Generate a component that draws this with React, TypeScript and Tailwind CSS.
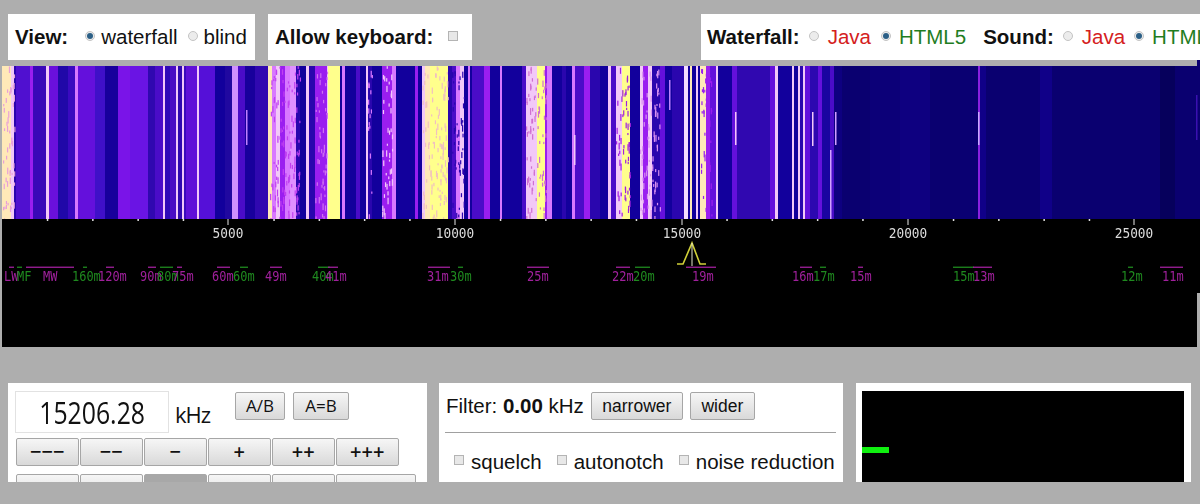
import React from "react";

const navy = "#12009c";
const deep = "#2a06ae";
const violet = "#4a0cc8";
const purple = "#6410dc";
const magenta = "#9a1ef0";
const pink = "#d878ff";
const pale = "#f2c8f8";
const cream = "#ffe9b8";
const yellow = "#ffff8c";

// x from, x to, colour
const stripes: [number, number, string][] = [
  [2, 11, cream], [11, 14, pale], [14, 16, deep], [16, 30, "#5010d0"], [30, 33, magenta], [33, 46, "#3a08b8"],
  [46, 49, pale], [49, 58, "#6a10dc"], [58, 68, "#2008a8"], [68, 75, "#3a0ac0"], [75, 78, pink], [78, 95, purple],
  [95, 105, "#4010c8"], [105, 118, "#18009c"], [118, 130, "#7a14e8"], [130, 148, "#6a14e4"], [148, 155, "#3008b0"],
  [155, 163, violet], [163, 165, pale], [165, 170, "#300ab8"], [170, 176, "#4a0cc4"], [176, 178, pale],
  [178, 182, "#3008b0"], [182, 184, pale], [184, 186, "#3a0abc"], [186, 197, "#6010d8"], [197, 199, pale],
  [199, 215, "#5510d8"], [215, 225, navy], [225, 232, "#2008a0"], [232, 238, "#d090ff"], [238, 245, violet],
  [245, 255, "#18009c"], [255, 268, "#3008b0"], [268, 272, cream], [272, 276, pink], [276, 280, pale],
  [280, 285, magenta], [285, 290, pink], [290, 296, "#e090ff"], [296, 300, deep],
  [300, 306, navy], [306, 309, pale], [309, 315, deep], [315, 327, magenta],
  [327, 328, pale], [328, 340, yellow], [340, 342, navy], [342, 345, pink], [345, 356, navy],
  [356, 360, violet], [360, 366, navy], [366, 368, pale], [368, 372, deep], [372, 382, navy],
  [382, 392, magenta], [392, 396, pink], [396, 415, navy], [415, 418, magenta], [418, 422, navy],
  [422, 425, pale], [425, 430, cream], [430, 448, yellow], [448, 452, deep], [452, 456, violet],
  [456, 460, pink], [460, 464, pale], [464, 468, navy], [468, 470, pink], [470, 472, navy],
  [472, 484, violet], [484, 490, magenta], [490, 500, navy], [500, 502, pink], [502, 522, navy],
  [522, 526, violet], [526, 532, pale], [532, 537, pale], [537, 545, yellow], [545, 547, magenta],
  [547, 552, pink], [552, 562, navy], [562, 566, deep], [566, 572, navy], [572, 575, pink],
  [575, 584, violet], [584, 590, magenta], [590, 600, deep], [600, 608, navy], [608, 611, pale],
  [611, 616, violet], [616, 622, pale], [622, 630, yellow], [630, 640, navy], [640, 643, pale],
  [643, 648, magenta], [648, 652, pale], [652, 660, deep], [660, 665, purple], [665, 672, navy],
  [672, 684, deep], [684, 688, "#f4dcff"], [688, 690, navy], [690, 692, cream], [692, 696, navy],
  [696, 698, pale], [698, 700, navy], [700, 706, cream], [706, 710, magenta], [710, 716, purple],
  [716, 718, pale], [718, 732, navy], [732, 737, purple], [737, 770, "#3008b0"], [770, 775, purple],
  [775, 778, pale], [778, 792, navy], [792, 794, pale], [794, 798, navy], [798, 800, pale],
  [800, 803, deep], [803, 805, pale], [805, 810, purple], [810, 818, "#2c08b0"], [818, 822, purple],
  [822, 830, "#1a04a0"], [830, 834, violet], [834, 842, "#0e0080"], [842, 870, "#0a0070"],
  [870, 900, "#0c0078"], [900, 930, "#0e0080"], [930, 960, "#0a0070"], [960, 978, "#0a0072"],
  [978, 980, "#8a20e0"], [980, 986, "#100088"], [986, 1040, "#0a0070"], [1040, 1052, "#100088"],
  [1052, 1160, "#0a0070"], [1160, 1175, "#06005c"], [1175, 1200, "#0a0070"],
];

// short bright pieces of a line: x, y from, y to, colour
const pieces: [number, number, number, string][] = [
  [246, 110, 145, "#c080ff"], [669, 80, 110, "#c080ff"], [735, 112, 145, pale], [835, 112, 145, "#d0a0ff"],
  [812, 112, 146, pale], [830, 150, 219, "#d0a0ff"], [978, 112, 145, "#c8a8ff"], [574, 135, 165, pale],
  [1196, 95, 140, "#3a10b0"],
];

// regions where the signal is speckled
const noisy: [number, number, string][] = [
  [3, 15, "#e8a0d8"], [270, 300, "#c040f0"], [315, 327, "#d070f0"], [382, 392, pale], [368, 372, pink],
  [452, 464, deep], [422, 448, "#f0c0c0"], [526, 546, "#d070d0"], [616, 630, "#a020e0"], [640, 660, "#d890f0"],
  [700, 712, magenta],
];

function speckle() {
  let seed = 7;
  const rnd = () => {
    seed = (seed * 16807) % 2147483647;
    return seed / 2147483647;
  };
  const out: { x: number; y: number; h: number; c: string }[] = [];
  noisy.forEach(([a, b, c]) => {
    const n = (b - a) * 4;
    for (let i = 0; i < n; i++) {
      out.push({ x: a + rnd() * (b - a), y: 66 + rnd() * 153, h: 2 + rnd() * 5, c });
    }
  });
  return out;
}

const majors = [
  { x: 228, label: "5000" },
  { x: 455, label: "10000" },
  { x: 682, label: "15000" },
  { x: 908, label: "20000" },
  { x: 1134, label: "25000" },
];

const mg = "#a0209c";
const gn = "#1f8a1f";
// label x, text, colour, bar from, bar to
const bands: [number, string, string, number, number][] = [
  [4, "LW", mg, 9, 14], [17, "MF", gn, 17, 22], [43, "MW", mg, 26, 74], [72, "160m", gn, 83, 87],
  [98, "120m", mg, 106, 114], [140, "90m", mg, 148, 156], [157, "80m", gn, 160, 173], [172, "75m", mg, 177, 182],
  [212, "60m", mg, 217, 230], [233, "60m", gn, 240, 248], [265, "49m", mg, 270, 282], [312, "40m", gn, 318, 330],
  [325, "41m", mg, 328, 338], [427, "31m", mg, 428, 450], [450, "30m", gn, 458, 463], [527, "25m", mg, 527, 549],
  [612, "22m", mg, 616, 630], [633, "20m", gn, 635, 650], [692, "19m", mg, 686, 716], [792, "16m", mg, 800, 812],
  [813, "17m", gn, 820, 826], [850, "15m", mg, 858, 863], [953, "15m", gn, 953, 974], [973, "13m", mg, 973, 992],
  [1121, "12m", gn, 1128, 1133], [1162, "11m", mg, 1160, 1183],
];

const Radio = ({ on, className }: { on?: boolean; className: string }) => (
  <span className={`flex w-[10px] h-[10px] shrink-0 -translate-y-[1px] items-center justify-center rounded-full border border-[#c4c4c4] bg-[#ececec] ${className}`}>
    {on && <span className="w-[6px] h-[6px] rounded-full bg-[#2b5f86]" />}
  </span>
);

const Check = ({ className }: { className: string }) => (
  <span className={`block w-[10px] h-[10px] shrink-0 border border-[#b4b4b4] bg-[#e8e8e8] ${className}`} />
);

const Btn = ({ children, className }: { children: React.ReactNode; className: string }) => (
  <button className={`h-[28px] rounded-[2px] border border-[#a6a6a6] bg-gradient-to-b from-[#f6f6f6] to-[#d9d9d9] text-[#111] ${className}`}>
    {children}
  </button>
);

export default function App() {
  const minor: number[] = [];
  for (let i = 1; i < 26; i++) {
    if (i % 5 !== 0) minor.push(1.5 + i * 45.3);
  }
  return (
    <div className="relative w-[1200px] h-[504px] overflow-hidden bg-[#aeaeae] pt-[14px] font-['Liberation_Sans',Arial,sans-serif] text-[#111]">
      <div className="flex h-[46px] text-[20.5px] leading-[46px]">
        <div className="ml-[8px] w-[247px] flex items-center bg-white pl-[7px]">
          <b>View:</b>
          <Radio on className="ml-[17px]" />
          <span className="ml-[6px]">waterfall</span>
          <Radio className="ml-[10px]" />
          <span className="ml-[6px]">blind</span>
        </div>
        <div className="ml-[13px] w-[204px] flex items-center bg-white pl-[7px]">
          <b>Allow keyboard:</b>
          <Check className="ml-[15px] -translate-y-[1px]" />
        </div>
        <div className="ml-auto w-[499px] flex items-center overflow-hidden whitespace-nowrap bg-white pl-[6px]">
          <b>Waterfall:</b>
          <Radio className="ml-[9px]" />
          <span className="ml-[9px] text-[#d42020]">Java</span>
          <Radio on className="ml-[10px]" />
          <span className="ml-[8px] text-[#1f7d1f]">HTML5</span>
          <b className="ml-[17px]">Sound:</b>
          <Radio className="ml-[9px]" />
          <span className="ml-[9px] text-[#d42020]">Java</span>
          <Radio on className="ml-[9px]" />
          <span className="ml-[8px] text-[#1f7d1f]">HTML5</span>
        </div>
      </div>

      <div className="mt-[6px] ml-[2px] h-[153px] overflow-hidden">
        <svg width="1198" height="153" viewBox="2 66 1198 153" className="block blur-[0.7px]">
          {stripes.map(([a, b, c], i) => (
            <rect key={i} x={a} y={66} width={b - a} height={153} fill={c} />
          ))}
          {speckle().map((d, i) => (
            <rect key={i} x={d.x} y={d.y} width={1.2} height={d.h} fill={d.c} />
          ))}
          {pieces.map(([x, y1, y2, c], i) => (
            <rect key={i} x={x} y={y1} width={1.5} height={y2 - y1} fill={c} />
          ))}
        </svg>
      </div>

      <div className="ml-[2px] mr-[3px] h-[128px] bg-black">
        <svg width="1195" height="128" viewBox="2 219 1195 128" className="block blur-[0.35px]">
          {minor.map((x) => (
            <rect key={x} x={x} y={219} width={1.5} height={2} fill="#e0e0e0" />
          ))}
          {majors.map((m) => (
            <g key={m.x}>
              <rect x={m.x - 0.5} y={219} width={1} height={6} fill="#e8e8e8" />
              <text
                x={m.x - (m.label.length * 7.7) / 2}
                y={238}
                fontFamily="DejaVu Sans Mono, monospace"
                fontSize="14"
                textLength={m.label.length * 7.7}
                lengthAdjust="spacingAndGlyphs"
                fill="#dcdcdc"
              >
                {m.label}
              </text>
            </g>
          ))}
          {bands.map(([x, t, c, a, b], i) => (
            <g key={i}>
              <rect x={a} y={266.6} width={b - a} height={1.3} fill={c} />
              <text
                x={x}
                y={281}
                fontFamily="DejaVu Sans Mono, monospace"
                fontSize="14"
                textLength={t.length * 7.2}
                lengthAdjust="spacingAndGlyphs"
                fill={c}
              >
                {t}
              </text>
            </g>
          ))}
          <polyline points="677,264 683,264 692,243 700,264 706,264" fill="none" stroke="#d0d038" strokeWidth="1.6" />
          <rect x={691.5} y={243} width={1} height={23} fill="#e8e8d0" />
        </svg>
      </div>

      {/* slivers at the right edge of the page */}
      <div className="absolute left-[1197px] top-[60px] h-[6px] w-[3px] bg-[#0a0070]" />
      <div className="absolute left-[1197px] top-[219px] h-[74px] w-[3px] bg-black" />

      <div className="mt-[36px] flex h-[99px] text-[20.5px]">
        <div className="ml-[8px] w-[419px] overflow-hidden bg-white pl-[7px] pt-[8px]">
          <div className="flex h-[42px]">
            <div className="flex w-[154px] h-[42px] items-center justify-center border border-[#e2e2e2] font-['Open_Sans',sans-serif] text-[31px]">
              <span className="scale-x-[0.8]">15206.28</span>
            </div>
            <span className="ml-[6px] mt-[8px] font-['Open_Sans',sans-serif] text-[22px] leading-[30px] tracking-[-1px]">kHz</span>
            <Btn className="ml-[25px] mt-[1px] w-[50px] font-['Open_Sans',sans-serif] text-[17px]">A/B</Btn>
            <Btn className="ml-[8px] mt-[1px] w-[56px] font-['Open_Sans',sans-serif] text-[17px]">A=B</Btn>
          </div>
          <div className="mt-[5px] ml-[1px] flex gap-[1.5px] font-['Open_Sans',sans-serif] text-[20px] font-semibold leading-none">
            {["−−−", "−−", "−", "+", "++", "+++"].map((t) => (
              <Btn key={t} className="w-[62.5px]">{t}</Btn>
            ))}
          </div>
          <div className="mt-[8px] ml-[1px] flex gap-[1.5px] font-['Open_Sans',sans-serif] text-[17px]">
            <Btn className="w-[62.5px] pb-[7px]">CW</Btn>
            <Btn className="w-[62.5px] pb-[7px]">LSB</Btn>
            <Btn className="w-[62.5px] pb-[7px] !border-[#a8a8a8] !from-[#a8a8a8] !to-[#a8a8a8]">USB</Btn>
            <Btn className="w-[62.5px] pb-[7px]">AM</Btn>
            <Btn className="w-[62.5px] pb-[7px]">FM</Btn>
            <Btn className="w-[80px] pb-[7px]">AM</Btn>
          </div>
        </div>

        <div className="ml-[12px] w-[404px] overflow-hidden bg-white px-[7px] pt-[9px]">
          <div className="flex h-[28px] items-center">
            <span>Filter: <b>0.00</b> kHz</span>
            <Btn className="ml-[7px] w-[92px] text-[17.5px]">narrower</Btn>
            <Btn className="ml-[7px] w-[65px] text-[17.5px]">wider</Btn>
          </div>
          <div className="mt-[12px] h-[1px] w-[391px] -ml-[1px] bg-[#a0a0a0]" />
          <div className="mt-[15px] flex items-center pl-[8px] leading-[28px]">
            <Check className="-translate-y-[2px]" />
            <span className="ml-[7px]">squelch</span>
            <Check className="ml-[15px] -translate-y-[2px]" />
            <span className="ml-[7px]">autonotch</span>
            <Check className="ml-[15px] -translate-y-[2px]" />
            <span className="ml-[7px]">noise reduction</span>
          </div>
        </div>

        <div className="ml-[13px] w-[335px] bg-white px-[6px] pt-[8px]">
          <div className="h-[91px] w-[322px] bg-black pt-[56px]">
            <div className="h-[6px] w-[27px] bg-[#10f010]" />
          </div>
        </div>
      </div>
    </div>
  );
}
